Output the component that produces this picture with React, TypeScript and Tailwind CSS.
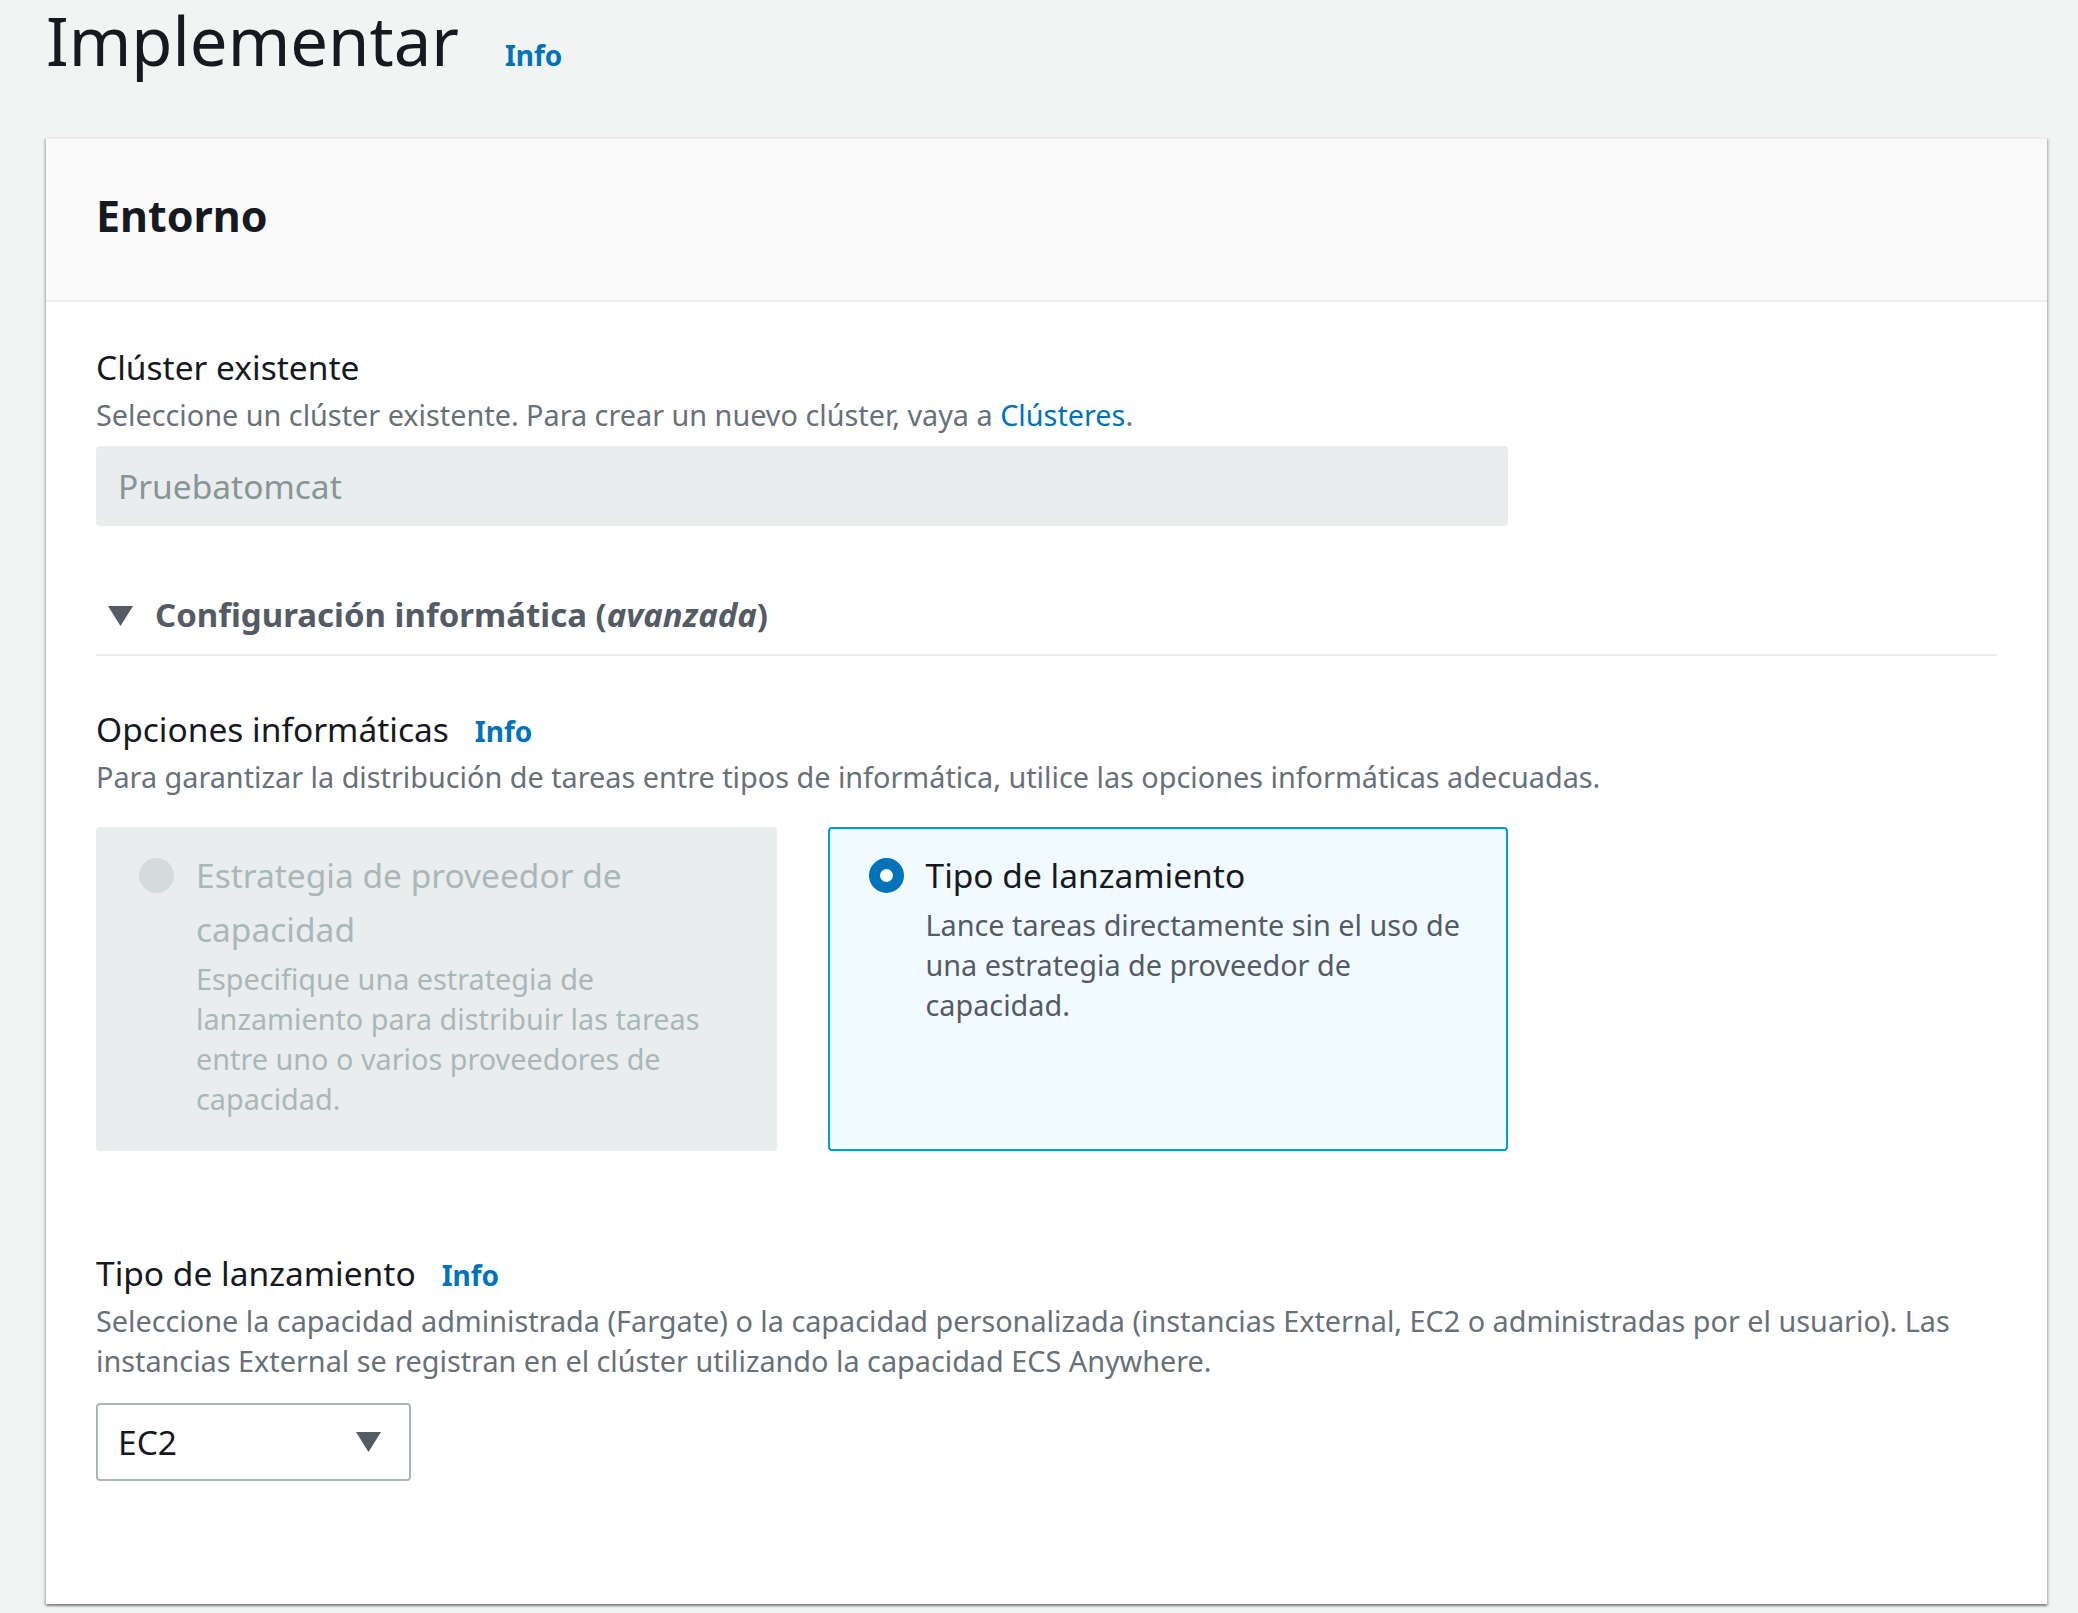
import React from 'react';

const font = { fontFamily: '"Noto Sans", "Open Sans", sans-serif' };

const InfoLink: React.FC<{ className?: string }> = ({ className }) => (
  <a className={`text-[28px] font-bold leading-none text-[#0073bb] ${className ?? ''}`}>Info</a>
);

const Caret: React.FC<{ w: number; h: number }> = ({ w, h }) => (
  <svg width={w} height={h} viewBox="0 0 10 8">
    <path d="M0 0 L10 0 L5 8 Z" fill="#545b64" />
  </svg>
);

const App: React.FC = () => {
  return (
    <div className="min-h-screen bg-[#f2f3f3] pb-[11px] text-[#16191f]" style={font}>
      <div className="pl-[46px] pr-[31px]">
        {/* page title */}
        <div className="flex h-[80px] items-baseline gap-[46px]">
          <h1 className="text-[67px] font-normal leading-[80px]">Implementar</h1>
          <InfoLink />
        </div>

        <div className="mt-[57px] w-[2001px] bg-white shadow-[0_2px_2px_0_rgba(0,28,36,0.3),2px_2px_2px_0_rgba(0,28,36,0.15),-2px_2px_2px_0_rgba(0,28,36,0.15)]">
          <div className="bg-[#fafafa] border-t-2 border-b-2 border-[#eaeded] pl-[50px] pt-[52px] pb-[59px]">
            <h2 className="text-[43px] font-bold leading-[50px]">Entorno</h2>
          </div>

          <div className="px-[50px] pt-[43px] pb-[123px]">
            {/* existing cluster */}
            <div className="w-[1412px]">
              <div className="text-[33.5px] leading-[44px]">Clúster existente</div>
              <p className="mt-[6px] text-[28.8px] leading-[40px] text-[#687078]">
                Seleccione un clúster existente. Para crear un nuevo clúster, vaya a{' '}
                <a className="text-[#0073bb]">Clústeres</a>.
              </p>
              <div className="mt-[11px] flex h-[80px] items-center rounded-[4px] bg-[#eaeded] px-[22px] text-[33.5px] text-[#879596]">
                Pruebatomcat
              </div>
            </div>

            {/* expandable section */}
            <div className="mt-[67px] border-b-2 border-[#eaeded] pb-[17px]">
              <div className="flex items-center text-[33px] font-bold leading-[44px] text-[#545b64]">
                <span className="ml-[12px] mr-[22px] mt-[2px] flex">
                  <Caret w={25} h={20} />
                </span>
                <span>
                  Configuración informática (<i>avanzada</i>)
                </span>
              </div>
            </div>

            <div className="mt-[51px] w-[1412px]">
              <div className="flex items-baseline">
                <span className="text-[33.5px] leading-[44px]">Opciones informáticas</span>
                <InfoLink className="ml-[26px]" />
              </div>
              <p className="mt-[6px] w-[1900px] text-[28.8px] leading-[40px] text-[#687078]">
                Para garantizar la distribución de tareas entre tipos de informática, utilice las opciones informáticas adecuadas.
              </p>

              <div className="mt-[30px] grid h-[324px] grid-cols-2 gap-[51px]">
                <div className="flex gap-[22px] rounded-[4px] border-2 border-[#eaeded] bg-[#eaeded] pl-[41px] pr-[32px] pt-[19px]">
                  <div className="mt-[10px] h-[35px] w-[35px] shrink-0 rounded-full bg-[#d5dbdb]" />
                  <div>
                    <div className="text-[33.5px] leading-[54px] text-[#aab7b8]">
                      Estrategia de proveedor de capacidad
                    </div>
                    <p className="mt-[3px] text-[28.8px] leading-[40px] text-[#aab7b8]">
                      Especifique una estrategia de lanzamiento para distribuir las tareas entre uno o varios proveedores de capacidad.
                    </p>
                  </div>
                </div>

                <div className="flex gap-[22px] rounded-[4px] border-2 border-[#00a1c9] bg-[#f1faff] pl-[39px] pr-[30px] pt-[19px]">
                  <div className="mt-[10px] h-[35px] w-[35px] shrink-0 rounded-full border-[11px] border-[#0073bb] bg-white" />
                  <div>
                    <div className="text-[33.5px] leading-[54px]">Tipo de lanzamiento</div>
                    <p className="mt-[3px] text-[28.8px] leading-[40px] text-[#545b64]">
                      Lance tareas directamente sin el uso de una estrategia de proveedor de capacidad.
                    </p>
                  </div>
                </div>
              </div>
            </div>

            {/* launch type */}
            <div className="mt-[100px]">
              <div className="flex items-baseline">
                <span className="text-[33.5px] leading-[44px]">Tipo de lanzamiento</span>
                <InfoLink className="ml-[26px]" />
              </div>
              <p className="mt-[6px] text-[28.8px] leading-[40px] text-[#687078]">
                Seleccione la capacidad administrada (Fargate) o la capacidad personalizada (instancias External, EC2 o administradas por el usuario). Las instancias External se registran en el clúster utilizando la capacidad ECS Anywhere.
              </p>
              <div className="mt-[22px] flex h-[78px] w-[315px] items-center justify-between rounded-[4px] border-2 border-[#aab7b8] bg-white pl-[20px] pr-[27px] text-[33.5px]">
                <span>EC2</span>
                <Caret w={27} h={20} />
              </div>
            </div>
          </div>
        </div>
      </div>
    </div>
  );
};

export default App;
